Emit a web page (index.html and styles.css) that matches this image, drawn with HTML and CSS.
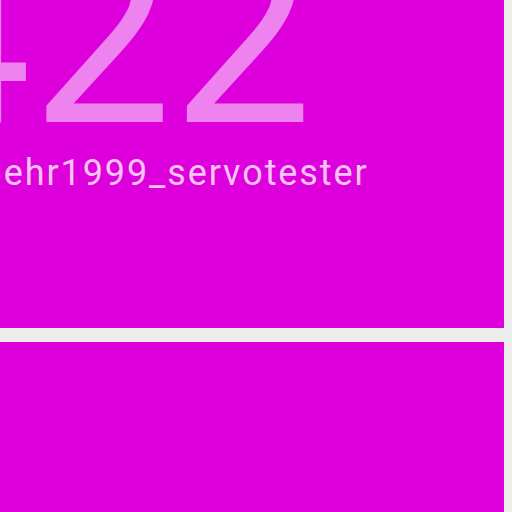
FILE: index.html
```html
<!DOCTYPE html>
<html>
<head>
<meta charset="utf-8">
<link rel="stylesheet" href="styles.css">
</head>
<body>
<div class="list">
  <div class="tile">
    <div class="value">422</div>
    <div class="name">uehr1999_servotester</div>
  </div>
  <div class="tile tile-next"></div>
</div>
</body>
</html>
```
FILE: styles.css
```css
html, body {
  margin: 0;
  padding: 0;
  background: #ececec;
  overflow: hidden;
}
.list {
  width: 504px;
  display: flex;
  flex-direction: column;
  gap: 14px;
}
.tile {
  background: #dd00dd;
  height: 328px;
  overflow: hidden;
  font-family: Roboto, "Noto Sans", sans-serif;
}
.tile-next {
  height: 170px;
}
.value {
  font-size: 250px;
  font-weight: 400;
  line-height: 1;
  color: #ee82ee;
  margin-left: -109px;
  margin-top: -88px;
  white-space: nowrap;
}
.name {
  font-size: 36px;
  line-height: 1;
  letter-spacing: 1.9px;
  color: #f8c4f8;
  margin-left: -18px;
  margin-top: -7px;
  white-space: nowrap;
}
```
